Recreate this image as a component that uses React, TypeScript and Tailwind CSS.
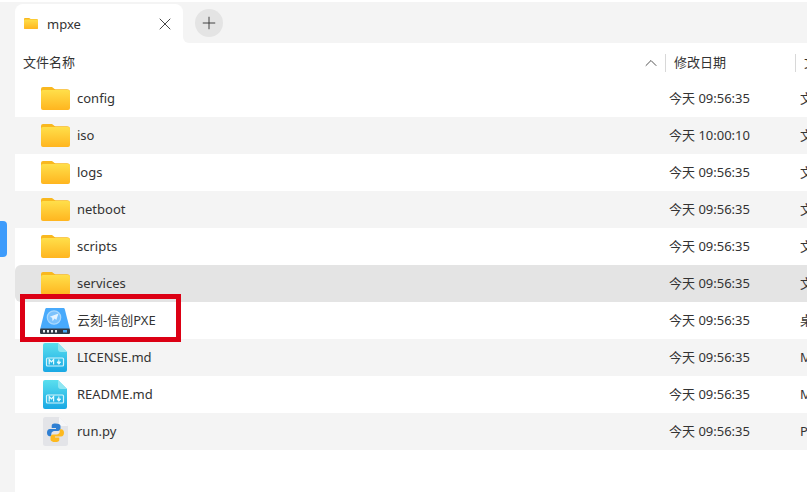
import { Plus, X, ChevronUp } from 'lucide-react'

const font = { fontFamily: '"Noto Sans", "Noto Sans CJK SC", sans-serif' }

function FolderIcon({ width = 29, id }: { width?: number; id: string }) {
  return (
    <svg width={width} height={width * (23 / 29)} viewBox="0 0 29 23" className="shrink-0">
      <defs>
        <linearGradient id={id} x1="0" y1="0" x2="0" y2="1">
          <stop offset="0" stopColor="#ffdf4a" />
          <stop offset="1" stopColor="#ffb51f" />
        </linearGradient>
      </defs>
      <path d="M2 0h8c1.500 0 2 .6 3 1.500.6.600 1 .8 2 .8h11a3 3 0 0 1 3 3V6H0V2a2 2 0 0 1 2-2z" fill="#f9b81f" />
      <rect x="0" y="3" width="29" height="20" rx="2" fill={`url(#${id})`} />
    </svg>
  )
}

function DriveIcon() {
  return (
    <svg width="30" height="26" viewBox="0 0 30 26" className="shrink-0">
      <path d="M7 0h16c1 0 1.600.5 1.900 1.400L29.800 21H.2L5.100 1.400C5.400.5 6 0 7 0z" fill="#48aafc" />
      <rect x="0" y="20.500" width="30" height="5.500" rx="1.200" fill="#2f3a46" />
      <rect x="3" y="22" width="2" height="2.500" fill="#e8eef3" />
      <rect x="7" y="22" width="2" height="2.500" fill="#e8eef3" />
      <rect x="11" y="22" width="2" height="2.500" fill="#e8eef3" />
      <rect x="15" y="22" width="2" height="2.500" fill="#e8eef3" />
      <rect x="23" y="22" width="4" height="2.500" fill="#45aaf8" />
      <circle cx="14" cy="9.500" r="6.700" fill="#7cc2fc" stroke="#a9d8fd" strokeWidth="1.200" />
      <path d="M18.500 5.500l-2.200 6.500-1.700-1.500-2 2.700-.5-3.500-2.300-1z" fill="#e4f3ff" />
    </svg>
  )
}

function MarkdownIcon({ id }: { id: string }) {
  return (
    <svg width="24" height="29" viewBox="0 0 24 29" className="shrink-0">
      <defs>
        <linearGradient id={id} x1="0" y1="0" x2="0" y2="1">
          <stop offset="0" stopColor="#5adfee" />
          <stop offset="1" stopColor="#19a8e4" />
        </linearGradient>
      </defs>
      <path d="M2 0h13l9 9v18a2 2 0 0 1-2 2H2a2 2 0 0 1-2-2V2a2 2 0 0 1 2-2z" fill={`url(#${id})`} />
      <path d="M15 0l9 9h-6a3 3 0 0 1-3-3z" fill="#8fe6f2" />
      <rect x="3.500" y="15" width="17" height="8" rx="1" fill="none" stroke="#d4f4fb" strokeWidth="1.200" />
      <path d="M6.200 21.500v-5l2.200 2.400 2.200-2.400v5" fill="none" stroke="#e6fbff" strokeWidth="1.200" />
      <path d="M15.800 16.500v3M14 19h3.600l-1.800 2.300z" fill="#e6fbff" stroke="#e6fbff" strokeWidth="1" />
    </svg>
  )
}

function PythonIcon() {
  return (
    <svg width="25" height="29" viewBox="0 0 25 29" className="shrink-0">
      <path d="M2.500 0H16l9 9v17.500a2.500 2.500 0 0 1-2.500 2.500h-20A2.500 2.500 0 0 1 0 26.500v-24A2.500 2.500 0 0 1 2.500 0z" fill="#e3e4e8" />
      <path d="M16 0l9 9h-7a2 2 0 0 1-2-2z" fill="#f6f6f8" />
      <path d="M12.300 6.500c-3.200 0-3.600 1.400-3.600 2.600V11h4.300v1H7c-1.900 0-3 1.500-3 3.700s1.100 3.600 2.800 3.600h1.500V17c0-1.600 1.300-3 3.100-3h3.600c1.400 0 2.500-1.100 2.500-2.500V9.100c0-1.500-1.600-2.600-5.200-2.600z" fill="#2f7fd2" />
      <path d="M12.700 25c3.200 0 3.600-1.400 3.600-2.600v-1.900H12v-1h6c1.900 0 3-1.500 3-3.700s-1.100-3.600-2.800-3.600h-1.500v2.300c0 1.600-1.300 3-3.100 3H10c-1.400 0-2.500 1.100-2.500 2.500v2.400c0 1.500 1.600 2.600 5.200 2.600z" fill="#fdb91f" />
    </svg>
  )
}

const rows = [
  { name: 'config', date: '今天 09:56:35', type: '文件夹', icon: 'folder' },
  { name: 'iso', date: '今天 10:00:10', type: '文件夹', icon: 'folder' },
  { name: 'logs', date: '今天 09:56:35', type: '文件夹', icon: 'folder' },
  { name: 'netboot', date: '今天 09:56:35', type: '文件夹', icon: 'folder' },
  { name: 'scripts', date: '今天 09:56:35', type: '文件夹', icon: 'folder' },
  { name: 'services', date: '今天 09:56:35', type: '文件夹', icon: 'folder' },
  { name: '云刻-信创PXE', date: '今天 09:56:35', type: '桌面应用', icon: 'drive' },
  { name: 'LICENSE.md', date: '今天 09:56:35', type: 'Markdown', icon: 'md' },
  { name: 'README.md', date: '今天 09:56:35', type: 'Markdown', icon: 'md' },
  { name: 'run.py', date: '今天 09:56:35', type: 'Python', icon: 'py' },
]

function RowIcon({ icon, id }: { icon: string; id: string }) {
  if (icon === 'folder') return <FolderIcon id={id} />
  if (icon === 'drive') return <DriveIcon />
  if (icon === 'md') return <MarkdownIcon id={id} />
  return <PythonIcon />
}

export default function App() {
  return (
    <div style={font} className="flex h-[492px] w-[807px] flex-col overflow-hidden bg-white text-[13px] text-[#333333]">
      <div className="h-[2px] shrink-0 bg-white" />
      <div className="flex min-h-0 flex-1">
        {/* left strip with sidebar handle */}
        <div className="flex w-[15px] shrink-0 flex-col bg-[#f4f4f4] pt-[219px]">
          <div className="h-[36px] w-[7px] rounded-r-[4px] bg-[#3d9bfb]" />
        </div>

        <div className="relative min-w-0 flex-1">
          {/* tab bar */}
          <div className="flex h-[42px]">
            <div className="w-[168px] shrink-0 bg-[#f4f4f4] pt-[2px]">
              <div className="flex h-[40px] items-center rounded-t-[8px] bg-white pr-[8px] pl-[9px]">
                <FolderIcon width={14} id="tab-folder" />
                <span className="ml-[9px] flex-1 leading-none">mpxe</span>
                <X size={20} strokeWidth={1.100} className="text-[#333333]" />
              </div>
            </div>
            <div className="h-[41px] flex-1 rounded-bl-[6px] bg-[#f4f4f4] pt-[7px] pl-[12px]">
              <div className="flex h-[28px] w-[28px] items-center justify-center rounded-full bg-[#e4e4e4]">
                <Plus size={20} strokeWidth={1.100} className="text-[#333333]" />
              </div>
            </div>
          </div>

          {/* column header */}
          <div className="flex h-[36px] items-center pt-[1px]">
            <span className="ml-[8px] w-[618px] shrink-0">文件名称</span>
            <ChevronUp size={20} strokeWidth={1.100} className="shrink-0 text-[#444444]" />
            <div className="ml-[4px] h-[18px] w-px shrink-0 bg-[#d8d8d8]" />
            <span className="ml-[8px] w-[121px] shrink-0">修改日期</span>
            <div className="h-[18px] w-px shrink-0 bg-[#d8d8d8]" />
            <span className="ml-[8px]">文</span>
          </div>

          {/* file rows */}
          <div className="flex flex-col">
            {rows.map((row, i) => (
              <div
                key={row.name}
                className={`flex h-[37px] items-center overflow-hidden pl-[25px] ${
                  row.name === 'services' ? 'rounded-l-[6px] bg-[#e4e4e4]' : i % 2 === 1 ? 'bg-[#f4f4f4]' : 'bg-white'
                }`}
              >
                <div className="flex w-[30px] shrink-0 justify-center">
                  <RowIcon icon={row.icon} id={`grad-${i}`} />
                </div>
                <span className="ml-[7px] flex-1">{row.name}</span>
                <span className="w-[131px] shrink-0 whitespace-nowrap">{row.date}</span>
                <span className="w-[7px] shrink-0 overflow-hidden whitespace-nowrap">{row.type}</span>
              </div>
            ))}
          </div>

          {/* red highlight drawn over the screenshot */}
          <div className="absolute top-[292px] left-[5px] h-[48px] w-[161px] border-[5px] border-[#dc0014]" />
        </div>
      </div>
    </div>
  )
}
